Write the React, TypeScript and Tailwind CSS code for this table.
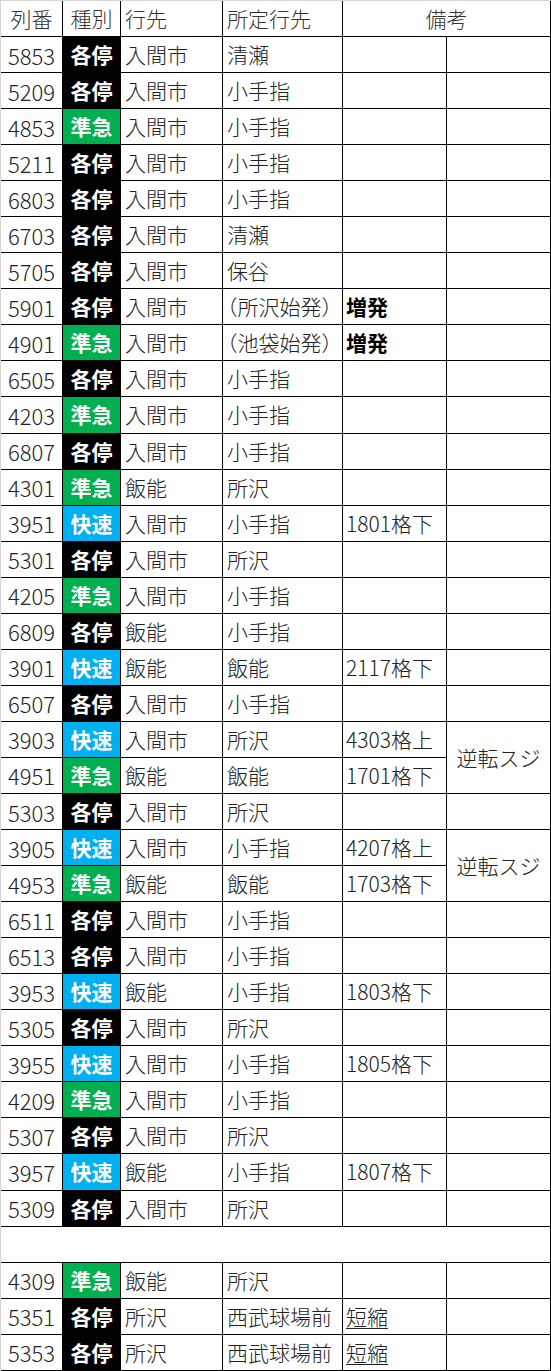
import React from "react";

type T = "各停" | "準急" | "快速";

interface Row {
  num: string;
  type: T;
  dest: string;
  orig: string;
  note?: string;
  noteStyle?: "bold" | "underline";
  paren?: boolean;
  merge?: "start" | "skip";
}

const typeBg: Record<T, string> = {
  各停: "bg-black",
  準急: "bg-[#00b050]",
  快速: "bg-[#00b0f0]",
};

const r = (
  num: string,
  type: T,
  dest: string,
  orig: string,
  extra: Partial<Row> = {}
): Row => ({ num, type, dest, orig, ...extra });

const main: Row[] = [
  r("5853", "各停", "入間市", "清瀬"),
  r("5209", "各停", "入間市", "小手指"),
  r("4853", "準急", "入間市", "小手指"),
  r("5211", "各停", "入間市", "小手指"),
  r("6803", "各停", "入間市", "小手指"),
  r("6703", "各停", "入間市", "清瀬"),
  r("5705", "各停", "入間市", "保谷"),
  r("5901", "各停", "入間市", "（所沢始発）", { note: "増発", noteStyle: "bold", paren: true }),
  r("4901", "準急", "入間市", "（池袋始発）", { note: "増発", noteStyle: "bold", paren: true }),
  r("6505", "各停", "入間市", "小手指"),
  r("4203", "準急", "入間市", "小手指"),
  r("6807", "各停", "入間市", "小手指"),
  r("4301", "準急", "飯能", "所沢"),
  r("3951", "快速", "入間市", "小手指", { note: "1801格下" }),
  r("5301", "各停", "入間市", "所沢"),
  r("4205", "準急", "入間市", "小手指"),
  r("6809", "各停", "飯能", "小手指"),
  r("3901", "快速", "飯能", "飯能", { note: "2117格下" }),
  r("6507", "各停", "入間市", "小手指"),
  r("3903", "快速", "入間市", "所沢", { note: "4303格上", merge: "start" }),
  r("4951", "準急", "飯能", "飯能", { note: "1701格下", merge: "skip" }),
  r("5303", "各停", "入間市", "所沢"),
  r("3905", "快速", "入間市", "小手指", { note: "4207格上", merge: "start" }),
  r("4953", "準急", "飯能", "飯能", { note: "1703格下", merge: "skip" }),
  r("6511", "各停", "入間市", "小手指"),
  r("6513", "各停", "入間市", "小手指"),
  r("3953", "快速", "飯能", "小手指", { note: "1803格下" }),
  r("5305", "各停", "入間市", "所沢"),
  r("3955", "快速", "入間市", "小手指", { note: "1805格下" }),
  r("4209", "準急", "入間市", "小手指"),
  r("5307", "各停", "入間市", "所沢"),
  r("3957", "快速", "飯能", "小手指", { note: "1807格下" }),
  r("5309", "各停", "入間市", "所沢"),
];

const tail: Row[] = [
  r("4309", "準急", "飯能", "所沢"),
  r("5351", "各停", "所沢", "西武球場前", { note: "短縮", noteStyle: "underline" }),
  r("5353", "各停", "所沢", "西武球場前", { note: "短縮", noteStyle: "underline" }),
];

const cell = "border-r border-b border-black flex items-center overflow-hidden whitespace-nowrap";

function DataRow({ row }: { row: Row }) {
  const noteCls =
    row.noteStyle === "bold"
      ? "font-bold text-black"
      : row.noteStyle === "underline"
      ? "underline underline-offset-[3px] decoration-1"
      : "";
  return (
    <>
      <div className={`${cell} pl-[7px] text-[22px]`}>{row.num}</div>
      <div className={`${cell} justify-center font-bold text-white ${typeBg[row.type]}`}>{row.type}</div>
      <div className={`${cell} pl-[4px]`}>{row.dest}</div>
      <div className={`${cell} pl-[4px] ${row.paren ? "[font-feature-settings:'halt']" : ""}`}>{row.orig}</div>
      <div className={`${cell} pl-[3px]`}>
        {row.note ? <span className={noteCls}>{row.note}</span> : null}
      </div>
      {row.merge === "start" ? (
        <div className={`${cell} row-span-2 justify-center`}>逆転スジ</div>
      ) : row.merge === "skip" ? null : (
        <div className={cell}></div>
      )}
    </>
  );
}

export default function App() {
  return (
    <div className="w-[551px] bg-white text-[#222] text-[21px] font-light leading-none font-['Noto_Sans_CJK_JP','Noto_Sans',sans-serif]">
      <div className="border-l border-t border-[#d4d4d4] grid grid-cols-[62px_58px_102px_120px_104px_104px] grid-rows-[36px] auto-rows-[36.05px]">
        <div className={`${cell} justify-center text-[#333]`}>列番</div>
        <div className={`${cell} justify-center text-[#333]`}>種別</div>
        <div className={`${cell} pl-[4px] text-[#333]`}>行先</div>
        <div className={`${cell} pl-[4px] text-[#333]`}>所定行先</div>
        <div className={`${cell} col-span-2 justify-center text-[#333]`}>備考</div>
        {main.map((row) => (
          <DataRow key={row.num} row={row} />
        ))}
        <div className={`${cell} col-span-6`}></div>
        {tail.map((row) => (
          <DataRow key={row.num} row={row} />
        ))}
      </div>
    </div>
  );
}
